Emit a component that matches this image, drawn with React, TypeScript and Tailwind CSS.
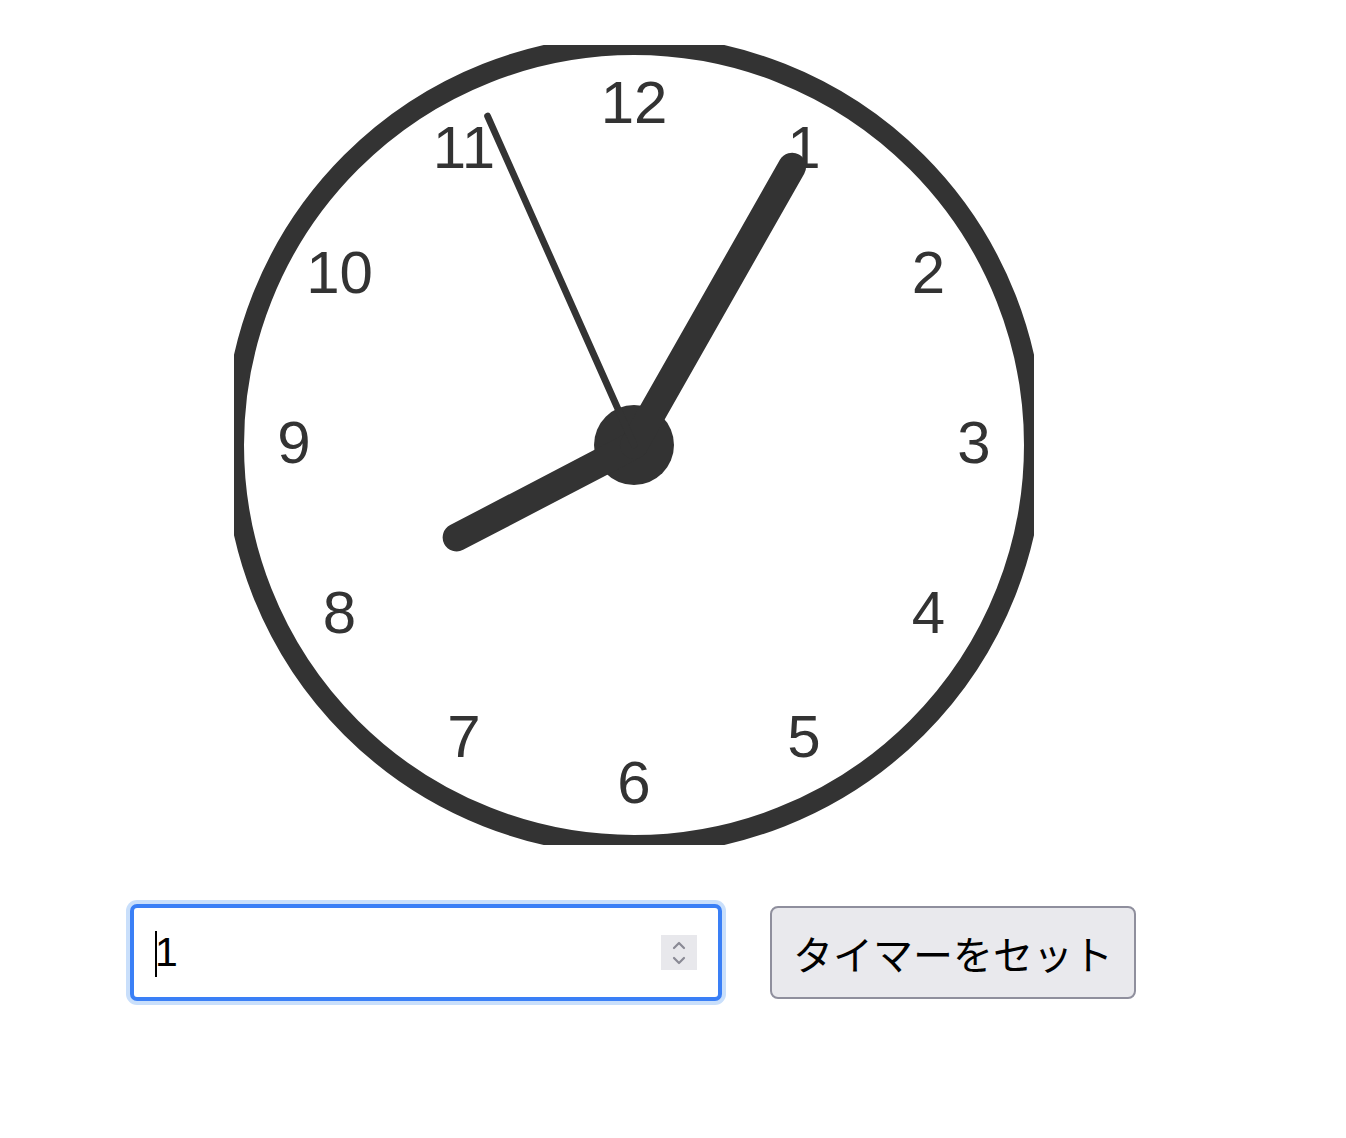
import React from "react";

// Clock face drawn at 800x800, radius 400, hands set to 8:04:56
const R = 400;
const TIME = { h: 8, m: 4, s: 56 };

function handEnd(deg: number, len: number) {
  const a = (deg * Math.PI) / 180;
  return { x: R + len * Math.sin(a), y: R - len * Math.cos(a) };
}

function Clock() {
  const hourDeg = TIME.h * 30 + TIME.m * 0.5 + TIME.s / 120;
  const minDeg = TIME.m * 6 + TIME.s * 0.1;
  const secDeg = TIME.s * 6;
  const hands = [
    { deg: hourDeg, len: R * 0.5, w: R * 0.07 },
    { deg: minDeg, len: R * 0.8, w: R * 0.07 },
    { deg: secDeg, len: R * 0.9, w: R * 0.017 },
  ];

  return (
    <svg width="800" height="800" viewBox="0 0 800 800" className="block">
      <circle cx={R} cy={R} r={R} fill="#fff" stroke="#333" strokeWidth={R * 0.05} />
      <circle cx={R} cy={R} r={R * 0.1} fill="#333" />
      {Array.from({ length: 12 }, (_, i) => {
        const n = i + 1;
        const p = handEnd(n * 30, R * 0.85);
        return (
          <text
            key={n}
            x={p.x}
            y={p.y - 3}
            fill="#333"
            fontSize={R * 0.15}
            fontFamily='"Liberation Sans", Arial, sans-serif'
            textAnchor="middle"
            dominantBaseline="central"
          >
            {n}
          </text>
        );
      })}
      {hands.map((h, i) => {
        const e = handEnd(h.deg, h.len);
        return (
          <line
            key={i}
            x1={R}
            y1={R}
            x2={e.x}
            y2={e.y}
            stroke="#333"
            strokeWidth={h.w}
            strokeLinecap="round"
          />
        );
      })}
    </svg>
  );
}

export default function App() {
  return (
    <div className="min-h-screen bg-white pt-[45px]" style={{ fontFamily: '"Liberation Sans", Arial, sans-serif' }}>
      <div className="ml-[234px] w-[800px] h-[800px] overflow-hidden">
        <Clock />
      </div>

      <div className="mt-[59px] ml-[130px] flex items-center gap-[48px]">
        {/* number input, focused look */}
        <div className="relative w-[592px] h-[97px] rounded-[7px] border-[4px] border-[#3a7ff6] shadow-[0_0_0_4px_#c9dffb] bg-white">
          <input
            type="number"
            defaultValue={1}
            className="w-full h-full pl-[21px] pr-[70px] text-[41px] text-black bg-transparent outline-none [appearance:textfield] [&::-webkit-inner-spin-button]:appearance-none [&::-webkit-outer-spin-button]:appearance-none"
            style={{ fontFamily: '"Liberation Sans", Arial, sans-serif' }}
          />
          <span className="absolute left-[21px] top-[23px] w-[2px] h-[46px] bg-black pointer-events-none" />
          <div className="absolute right-[21px] top-[27px] w-[36px] h-[35px] bg-[#e8e8ec] flex items-center justify-center pointer-events-none">
            <svg width="16" height="26" viewBox="0 0 16 26" fill="none">
              <path d="M3 8l5-5 5 5" stroke="#8a8a95" strokeWidth="2.2" strokeLinecap="round" strokeLinejoin="round" />
              <path d="M3 18l5 5 5-5" stroke="#8a8a95" strokeWidth="2.2" strokeLinecap="round" strokeLinejoin="round" />
            </svg>
          </div>
        </div>

        <button
          className="w-[366px] h-[93px] rounded-[8px] border-2 border-[#8f8f9d] bg-[#e9e9ed] text-black text-[40px] leading-none flex items-center justify-center"
          style={{ fontFamily: '"Noto Sans CJK JP", sans-serif' }}
        >
          タイマーをセット
        </button>
      </div>
    </div>
  );
}
